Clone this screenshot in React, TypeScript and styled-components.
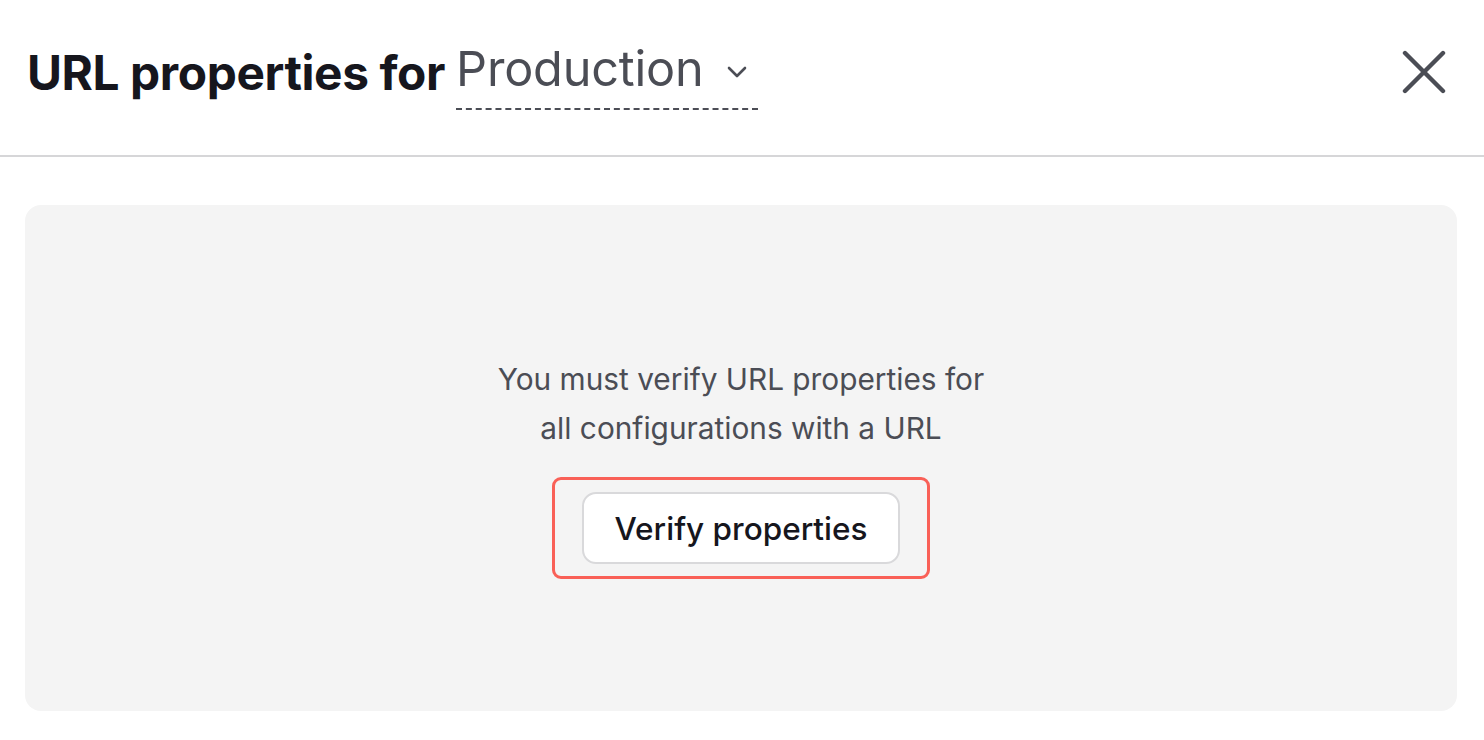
import React from 'react';
import styled, { createGlobalStyle } from 'styled-components';

const GlobalStyle = createGlobalStyle`
  html, body {
    margin: 0;
    padding: 0;
    background: #fff;
  }
  body {
    font-family: Inter, "Noto Sans", sans-serif;
    -webkit-font-smoothing: antialiased;
  }
`;

const ChevronIcon = () => (
  <svg width="22" height="14" viewBox="0 0 22 14" fill="none">
    <path d="M3 3l8 8 8-8" stroke="#4b4d55" strokeWidth="2.6" strokeLinecap="round" strokeLinejoin="round" />
  </svg>
);

const CloseIcon = () => (
  <svg width="44" height="44" viewBox="0 0 44 44" fill="none">
    <path d="M3 3l38 38M41 3L3 41" stroke="#4b4d55" strokeWidth="4.4" strokeLinecap="round" />
  </svg>
);

const App = () => {
  return (
    <Page>
      <GlobalStyle />
      <Header>
        <Title>
          URL properties for
          <EnvPicker>
            Production
            <ChevronIcon />
          </EnvPicker>
        </Title>
        <CloseButton aria-label="Close">
          <CloseIcon />
        </CloseButton>
      </Header>

      <Panel>
        <Message>
          You must verify URL properties for
          <br />
          all configurations with a URL
        </Message>
        <Highlight>
          <Button>Verify properties</Button>
        </Highlight>
      </Panel>
    </Page>
  );
};

const Page = styled.div`
  display: flex;
  flex-direction: column;
  width: 100%;
  height: 740px;
  background: #fff;
`;

const Header = styled.div`
  display: flex;
  align-items: center;
  justify-content: space-between;
  height: 157px;
  padding: 0 38px 0 27px;
  box-sizing: border-box;
  border-bottom: 2px solid #d6d6d8;
`;

const Title = styled.h1`
  display: flex;
  align-items: center;
  gap: 11px;
  margin: 0;
  margin-top: -10px;
  font-size: 47.8px;
  font-weight: 700;
  letter-spacing: -0.4px;
  color: #16161d;
`;

const EnvPicker = styled.span`
  display: flex;
  align-items: center;
  gap: 22px;
  padding: 4px 10px 10px 0;
  font-size: 48.6px;
  font-weight: 400;
  letter-spacing: -0.2px;
  color: #4b4d55;
  border-bottom: 2px dashed #4b4d55;
  cursor: pointer;

  svg {
    margin-top: 6px;
  }
`;

const CloseButton = styled.button`
  display: flex;
  padding: 0;
  border: none;
  background: none;
  cursor: pointer;
  margin-top: -12px;
`;

const Panel = styled.div`
  display: flex;
  flex-direction: column;
  align-items: center;
  justify-content: center;
  margin: 48px 27px 27px 25px;
  height: 506px;
  padding-top: 18px;
  box-sizing: border-box;
  border-radius: 16px;
  background: #f4f4f4;
`;

const Message = styled.p`
  margin: 0 0 24px;
  font-size: 29.8px;
  line-height: 49px;
  text-align: center;
  color: #4b4d55;
`;

const Highlight = styled.div`
  display: flex;
  padding: 12px 27px;
  border: 3px solid #f96057;
  border-radius: 9px;
`;

const Button = styled.button`
  padding: 0 30px;
  height: 72px;
  font-family: Inter, "Noto Sans", sans-serif;
  font-size: 31.5px;
  font-weight: 500;
  color: #16161d;
  background: #fff;
  border: 2px solid #d9d9db;
  border-radius: 14px;
  cursor: pointer;
`;

export default App;
